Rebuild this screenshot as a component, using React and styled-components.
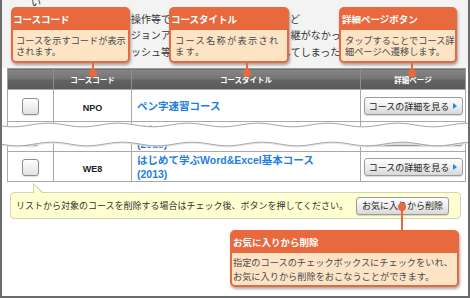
import React from "react";
import styled, { createGlobalStyle } from "styled-components";

const GlobalStyle = createGlobalStyle`
  body {
    margin: 0;
    background: #fff;
    font-family: "Liberation Sans", "Noto Sans CJK JP", sans-serif;
  }
`;

const ORANGE = "#e9693f";

// 外枠
const Frame = styled.div`
  position: relative;
  width: 470px;
  height: 298px;
  box-sizing: border-box;
  border: 2px solid #6b6b6b;
  border-top: none;
  background: #fff;
  overflow: hidden;
`;

// 上部の説明文（吹き出しの下に隠れる）
const Intro = styled.div`
  height: 68px;
  padding: 0 9px;
  background: #f3f3f3;
  overflow: hidden;
`;

const IntroText = styled.p`
  margin: -5px 0 0;
  font-size: 10px;
  line-height: 16.5px;
  color: #333;
  white-space: nowrap;

  span {
    display: block;
  }
`;

// 一覧テーブル
const TableWrap = styled.div`
  margin: 0 3px 0 5px;
`;

const Table = styled.table`
  width: 458px;
  table-layout: fixed;
  border-collapse: collapse;
  border: 1px solid #9a9a9a;
`;

const HeadCell = styled.th`
  height: 20px;
  padding: 0;
  background: linear-gradient(#868686 0%, #747474 48%, #626262 52%, #5a5a5a 100%);
  color: #fff;
  font-size: 7.5px;
  font-weight: bold;
  border-left: 1px solid #8e8e8e;

  &:first-child {
    border-left: none;
  }
`;

const Cell = styled.td`
  height: ${(p) => p.$h}px;
  padding: 0 ${(p) => p.$pad || 0}px;
  border: 1px solid #a9a9a9;
  text-align: ${(p) => p.$align || "center"};
  vertical-align: middle;
  background: #fff;
`;

const Check = styled.span`
  display: inline-block;
  width: 17px;
  height: 17px;
  box-sizing: border-box;
  border: 1px solid #8d8d8d;
  border-radius: 3px;
  background: linear-gradient(#fefefe, #e2e2e2);
  box-shadow: inset 0 1px 0 #fff, 0 1px 1px rgba(0, 0, 0, 0.12);
  vertical-align: middle;
`;

const Code = styled.span`
  font-size: 9px;
  font-weight: bold;
  color: #222;
`;

const CourseLink = styled.a`
  display: block;
  font-size: 10.5px;
  line-height: 14px;
  font-weight: bold;
  color: #1f80e1;
  text-decoration: none;
`;

const Button = styled.button`
  display: inline-flex;
  align-items: center;
  justify-content: center;
  gap: 4px;
  width: ${(p) => p.$w}px;
  height: 18px;
  padding: 0;
  box-sizing: border-box;
  border: 1px solid #9b9b9b;
  border-radius: 3px;
  background: linear-gradient(#ffffff 0%, #ececec 55%, #d8d8d8 100%);
  box-shadow: 0 1px 1px rgba(0, 0, 0, 0.15);
  font-family: inherit;
  font-size: 9px;
  color: #222;
`;

const Arrow = styled.span`
  width: 0;
  height: 0;
  border-left: 4px solid #1c8ae6;
  border-top: 3.5px solid transparent;
  border-bottom: 3.5px solid transparent;
`;

// 黄色の注意書き
const Note = styled.div`
  position: relative;
  display: flex;
  align-items: center;
  justify-content: space-between;
  height: 27px;
  margin: 10px 7px 0 8px;
  padding: 0 11px 0 5px;
  box-sizing: border-box;
  border: 1px solid #d2d2bd;
  border-radius: 4px;
  background: #ffffcf;
  font-size: 9px;
  color: #333;

  &::before,
  &::after {
    content: "";
    position: absolute;
    width: 0;
    height: 0;
  }

  &::before {
    left: 22px;
    top: -10px;
    border-bottom: 10px solid #cfcfba;
    border-right: 11px solid transparent;
  }

  &::after {
    left: 23px;
    top: -8px;
    border-bottom: 9px solid #ffffcf;
    border-right: 9px solid transparent;
  }
`;

// 吹き出し
const Callout = styled.div`
  position: absolute;
  left: ${(p) => p.$x}px;
  top: ${(p) => p.$y}px;
  width: ${(p) => p.$w}px;
  box-sizing: border-box;
  padding: 0 2px 2px;
  border-radius: 5px;
  background: ${ORANGE};
  box-shadow: 1px 2px 3px rgba(0, 0, 0, 0.35);
  z-index: 2;
`;

const CalloutTitle = styled.div`
  display: flex;
  align-items: center;
  height: 23px;
  padding-left: ${(p) => p.$pl || 0}px;
  color: #fff;
  font-size: 9.5px;
  font-weight: bold;
`;

const CalloutBody = styled.div`
  height: ${(p) => p.$h}px;
  box-sizing: border-box;
  padding: ${(p) => p.$pt}px 0 0 ${(p) => p.$pl}px;
  border-radius: 0 0 3px 3px;
  background: #fde4c5;
  font-size: 9.2px;
  line-height: ${(p) => p.$lh}px;
  letter-spacing: ${(p) => p.$ls || 0}px;
  color: #4a4a4a;
  white-space: nowrap;
`;

const Pin = styled.div`
  position: absolute;
  left: ${(p) => p.$x}px;
  top: ${(p) => p.$y}px;
  width: 2px;
  height: ${(p) => p.$h}px;
  background: ${ORANGE};
  z-index: 3;

  &::after {
    content: "";
    position: absolute;
    left: -3px;
    ${(p) => (p.$dotTop ? "top: -4px;" : "bottom: -4px;")}
    width: 8px;
    height: 8px;
    border-radius: 50%;
    background: ${ORANGE};
  }
`;

// 省略を示す波線
const Break = styled.svg`
  position: absolute;
  left: 0;
  top: 116px;
  z-index: 1;
`;

const wave = (y0, amp, period, phase, w) => {
  const pts = [];
  for (let x = 0; x <= w; x += 2) {
    pts.push([x, +(y0 + amp * Math.sin((2 * Math.PI * x) / period + phase)).toFixed(2)]);
  }
  return pts;
};

const WaveBreak = () => {
  const w = 466;
  const top = wave(9, 1.8, 70, 0.6, w);
  const bottom = wave(28, 1.8, 70, 0.2, w);
  const line = (pts) => "M" + pts.map((p) => p.join(" ")).join(" L");
  const fill = line(top) + " L" + [...bottom].reverse().map((p) => p.join(" ")).join(" L") + " Z";
  return (
    <Break width={w} height="36" viewBox={`0 0 ${w} 36`}>
      <path d={fill} fill="#fff" />
      <path d={line(top)} fill="none" stroke="#a8a8a8" strokeWidth="1" />
      <path d={line(bottom.map(([x, y]) => [x, y + 1]))} fill="none" stroke="#e2e2e2" strokeWidth="1" />
      <path d={line(bottom)} fill="none" stroke="#a8a8a8" strokeWidth="1" />
    </Break>
  );
};

const rows = [
  { code: "NPO", title: ["ペン字速習コース"], h: 31 },
  { code: "WE7", title: ["はじめて学ぶWord&Excel応用コース", "(2013)"], h: 29 },
  { code: "WE8", title: ["はじめて学ぶWord&Excel基本コース", "(2013)"], h: 29 },
];

const App = () => {
  return (
    <>
      <GlobalStyle />
      <Frame>
        <Intro>
          <IntroText>
            <span>　　い</span>
            <span>端末の変更や誤った削除の操作等で、データが失われた場合など</span>
            <span>は、ご利用のアプリのバージョンアップ時に前のデータを引き継がなかった場合や、</span>
            <span>また、ブラウザ本体のキャッシュ等を含む閲覧データを消去してしまった場合は、</span>
          </IntroText>
        </Intro>

        <TableWrap>
          <Table>
            <colgroup>
              <col style={{ width: 46 }} />
              <col style={{ width: 78 }} />
              <col style={{ width: 229 }} />
              <col style={{ width: 105 }} />
            </colgroup>
            <thead>
              <tr>
                <HeadCell />
                <HeadCell>コースコード</HeadCell>
                <HeadCell>コースタイトル</HeadCell>
                <HeadCell>詳細ページ</HeadCell>
              </tr>
            </thead>
            <tbody>
              {rows.map((r) => (
                <tr key={r.code}>
                  <Cell $h={r.h}>
                    <Check />
                  </Cell>
                  <Cell $h={r.h}>
                    <Code>{r.code}</Code>
                  </Cell>
                  <Cell $h={r.h} $align="left" $pad={5}>
                    <CourseLink href="#">
                      {r.title.map((t, i) => (
                        <React.Fragment key={i}>
                          {i > 0 && <br />}
                          {t}
                        </React.Fragment>
                      ))}
                    </CourseLink>
                  </Cell>
                  <Cell $h={r.h}>
                    <Button $w={99}>
                      コースの詳細を見る
                      <Arrow />
                    </Button>
                  </Cell>
                </tr>
              ))}
            </tbody>
          </Table>
        </TableWrap>

        <Note>
          <span>リストから対象のコースを削除する場合はチェック後、ボタンを押してください。</span>
          <Button $w={93}>お気に入りから削除</Button>
        </Note>

        <WaveBreak />

        <Callout $x={9} $y={7} $w={119}>
          <CalloutTitle>コースコード</CalloutTitle>
          <CalloutBody $h={31} $pt={6} $pl={3} $lh={10.5}>
            コースを示すコードが表示
            <br />
            されます。
          </CalloutBody>
        </Callout>
        <Pin $x={90} $y={63} $h={10} />

        <Callout $x={167} $y={7} $w={120}>
          <CalloutTitle>コースタイトル</CalloutTitle>
          <CalloutBody $h={31} $pt={6} $pl={4} $lh={10.5} $ls={1.3}>
            コース名称が表示され
            <br />
            ます。
          </CalloutBody>
        </Callout>
        <Pin $x={244} $y={63} $h={10} />

        <Callout $x={337} $y={7} $w={118}>
          <CalloutTitle $pl={1}>詳細ページボタン</CalloutTitle>
          <CalloutBody $h={31} $pt={6} $pl={4} $lh={10.5}>
            タップすることでコース詳
            <br />
            細ページへ遷移します。
          </CalloutBody>
        </Callout>
        <Pin $x={409} $y={63} $h={10} />

        <Pin $x={399} $y={207} $h={23} $dotTop />
        <Callout $x={228} $y={230} $w={229}>
          <CalloutTitle $pl={1}>お気に入りから削除</CalloutTitle>
          <CalloutBody $h={32} $pt={3} $pl={1} $lh={14}>
            指定のコースのチェックボックスにチェックをいれ、
            <br />
            お気に入りから削除をおこなうことができます。
          </CalloutBody>
        </Callout>
      </Frame>
    </>
  );
};

export default App;
